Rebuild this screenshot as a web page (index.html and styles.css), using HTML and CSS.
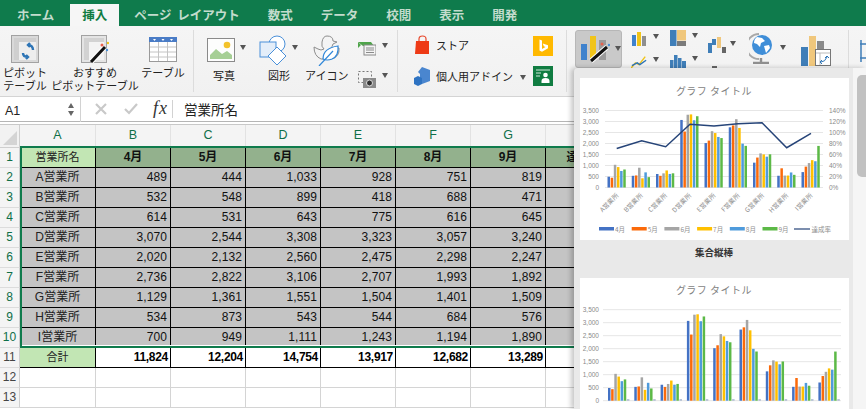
FILE: index.html
```html
<!DOCTYPE html>
<html lang="ja">
<head>
<meta charset="utf-8">
<title>Excel 挿入</title>
<link rel="stylesheet" href="styles.css">
</head>
<body>
<div class="app">
  <nav class="tabs">
    <span class="tab">ホーム</span>
    <span class="tab active">挿入</span>
    <span class="tab">ページ レイアウト</span>
    <span class="tab">数式</span>
    <span class="tab">データ</span>
    <span class="tab">校閲</span>
    <span class="tab">表示</span>
    <span class="tab">開発</span>
  </nav>

  <div class="ribbon">
    <section class="group g1">
      <div class="item w-pivot">
        <svg class="ic i-pivot" viewBox="0 0 28 28"><rect x=".5" y=".5" width="27" height="27" fill="#d9d9d9" stroke="#a2a2a2"/><rect x="3" y="3" width="22" height="22" fill="#eee"/><rect x="3" y="3" width="22" height="4" fill="#cfcfcf"/><rect x="3" y="3" width="5" height="22" fill="#cfcfcf"/><path d="M12 18q0 4 5 4M15 20l2 2-2 2M22 15q0-5-5-5M19 8l-2 2 2 2" fill="none" stroke="#2e75b6" stroke-width="2.4"/></svg>
        <div class="lbl">ピボット<br>テーブル</div>
      </div>
      <div class="item w-rec">
        <svg class="ic i-pivot" viewBox="0 0 28 28"><rect x=".5" y=".5" width="25" height="27" fill="#e4e4e4" stroke="#a2a2a2"/><rect x="3" y="3" width="20" height="22" fill="#f3f3f3"/><rect x="3" y="3" width="20" height="4" fill="#d2d2d2"/><rect x="3" y="3" width="5" height="22" fill="#d2d2d2"/><path d="M10 27L24 12" stroke="#fff" stroke-width="5"/><path d="M10 27L24 12" stroke="#111" stroke-width="3"/><circle cx="21" cy="10" r="1.5" fill="#e8604c"/><circle cx="27" cy="8" r="1.2" fill="#f0c419"/><circle cx="26" cy="15" r="1.2" fill="#4a90d9"/></svg>
        <div class="lbl">おすすめ<br>ピボットテーブル</div>
      </div>
      <div class="item w-tbl">
        <svg class="ic i-tbl" viewBox="0 0 28 25"><rect x=".5" y=".5" width="27" height="24" fill="#fff" stroke="#9a9a9a"/><rect width="28" height="5" fill="#4a7cc6"/><path d="M4 2h3L5.500 4zM12.500 2h3L14 4zM21 2h3l-1.500 2z" fill="#fff"/><path d="M1 10h26M1 15h26M1 20h26M9.500 5v19M18.500 5v19" stroke="#c4c4c4"/></svg>
        <div class="lbl lbl-one">テーブル</div>
      </div>
    </section>

    <section class="group g2">
      <div class="item w-photo">
        <div class="top">
          <svg class="ic i-photo" viewBox="0 0 28 24"><rect x=".5" y=".5" width="27" height="23" fill="#fdfdfd" stroke="#8a8a8a"/><path d="M3 21V17l6-6 6 5 5-3 5 4v4z" fill="#a6cf95"/><circle cx="20" cy="7" r="3.300" fill="#f3c22b"/></svg>
          <i class="caret"></i>
        </div>
        <div class="lbl lbl-one">写真</div>
      </div>
      <div class="item w-shape">
        <div class="top">
          <svg class="ic i-shape" viewBox="0 0 28 30"><circle cx="18" cy="9" r="8" fill="#fff" stroke="#4a90d9"/><rect x="1" y="7" width="16" height="15" fill="#e4eef9" stroke="#4a90d9"/><path d="M18 12l9 9-9 9-9-9z" fill="#fff" stroke="#4a90d9"/></svg>
          <i class="caret"></i>
        </div>
        <div class="lbl lbl-one">図形</div>
      </div>
      <div class="item w-icon">
        <svg class="ic i-duck" viewBox="0 0 27 32"><path d="M14 2q6 0 6 5l4 1-4 2q-1 3-2 4h8q1 9-8 11H8Q1 22 1 13l4 2q3 2 6 0-3-2-2-7 1-6 5-6z" fill="none" stroke="#8d8d8d"/><path d="M10 25q0-11 15-13 1 10-6 13-5 2-9 0z" fill="#fff" stroke="#2e86d8" stroke-width="1.200"/><path d="M6 32l14-15" stroke="#2e86d8" stroke-width="1.200"/></svg>
        <div class="lbl lbl-one">アイコン</div>
      </div>
      <div class="stack">
        <div class="mini">
          <svg class="i-sm" viewBox="0 0 18 16"><path d="M0 2h13l3 4H5z" fill="#4fa44a"/><path d="M0 2l3 3L0 8z" fill="#4fa44a"/><rect x="6" y="5" width="12" height="10" fill="#f4f4f4" stroke="#8a8a8a"/><path d="M8 8h8M8 10h8M8 12.500h8" stroke="#8a8a8a"/></svg>
          <i class="caret"></i>
        </div>
        <div class="mini">
          <svg class="i-sm2" viewBox="0 0 18 18"><rect x=".5" y=".5" width="13" height="11" fill="none" stroke="#777" stroke-dasharray="2 2"/><rect x="5" y="7" width="13" height="10" fill="#8a8a8a"/><circle cx="11.500" cy="12" r="3" fill="#333" stroke="#ddd"/></svg>
          <i class="caret"></i>
        </div>
      </div>
    </section>

    <section class="group g3">
      <div class="addin">
        <div class="addin-row">
          <svg class="i-store" viewBox="0 0 15 20"><path d="M4 6V4q0-3 3.500-3T11 4v2" fill="none" stroke="#e8482c" stroke-width="1.200"/><path d="M1 6h13v13H0z" fill="#ee3a16"/></svg>
          <span class="addin-text">ストア</span>
        </div>
        <div class="addin-row">
          <svg class="i-store" viewBox="0 0 17 20"><path d="M8 1l8 3v11l-8 3-2-1V8L4 6z" fill="#4a86cf"/><path d="M4 10l4 2v6l-4 2-4-2v-6z" fill="#2e73c2"/></svg>
          <span class="addin-text">個人用アドイン</span>
          <i class="caret caret-addin"></i>
        </div>
      </div>
      <div class="apps">
        <svg class="i-app" viewBox="0 0 20 20"><rect width="20" height="20" fill="#ffb900"/><path d="M6.500 3.500l2.500 1v8.500l3.500-2-1.700-.8-1-2.700 5.200 1.800v3l-6 3.500-2.500-1.300z" fill="#fff"/></svg>
        <svg class="i-app" viewBox="0 0 20 20"><rect width="20" height="20" fill="#107c41"/><path d="M3 4h14M3 7h5M3 10h4" stroke="#cfe8da"/><circle cx="12.500" cy="9" r="2.300" fill="#fff"/><path d="M8.500 17v-2q0-3 4-3t4 3v2z" fill="#fff"/></svg>
      </div>
    </section>

    <section class="group g4">
      <button class="chart-btn" type="button">
        <svg class="i-rec" viewBox="0 0 30 32"><rect x="1" y="13" width="6" height="16" fill="#3f82cd"/><rect x="10" y="5" width="6" height="24" fill="#f0c419"/><rect x="19" y="9" width="7" height="20" fill="#9a9a9a"/><path d="M11 30L27 16" stroke="#fff" stroke-width="5"/><path d="M11 30L27 16" stroke="#111" stroke-width="3"/><circle cx="22" cy="13" r="1.500" fill="#e8604c"/><circle cx="29" cy="14" r="1.200" fill="#4a90d9"/></svg>
        <i class="caret"></i>
      </button>
      <div class="chart-col c1">
        <div class="mini">
          <svg class="i-ch" viewBox="0 0 16 16"><rect x="1" y="4" width="4" height="11" fill="#3f82cd"/><rect x="6" y="1" width="4" height="14" fill="#f0c419"/><rect x="11" y="5" width="4" height="10" fill="#8f8f8f"/></svg>
          <i class="caret"></i>
        </div>
        <div class="mini">
          <svg class="i-ch" viewBox="0 0 18 16"><path d="M0 15l5-6 4 2 7-9" fill="none" stroke="#f0c419" stroke-width="1.600"/><path d="M1 12l6-3 3 2 7-5" fill="none" stroke="#2e75b6" stroke-width="1.600"/></svg>
          <i class="caret"></i>
        </div>
      </div>
      <div class="chart-col c2">
        <div class="mini">
          <svg class="i-ch" viewBox="0 0 16 16"><rect x="0" y="0" width="6.500" height="16" fill="#3f7eb8"/><rect x="7" y="0" width="9" height="10.500" fill="#f0c77c"/><rect x="7" y="11" width="9" height="5" fill="#7b7b7b"/></svg>
          <i class="caret"></i>
        </div>
        <div class="mini">
          <svg class="i-ch" viewBox="0 0 16 16"><rect x="0" y="7" width="3.500" height="9" fill="#3f7eb8"/><rect x="4" y="2" width="3.500" height="14" fill="#3f7eb8"/><rect x="8" y="5" width="3.500" height="11" fill="#3f7eb8"/><rect x="12" y="8" width="4" height="8" fill="#3f7eb8"/></svg>
          <i class="caret"></i>
        </div>
      </div>
      <div class="chart-col c3">
        <div class="mini">
          <svg class="i-wf" viewBox="0 0 18 17"><rect x="0" y="7" width="4" height="10" fill="#3f7eb8"/><rect x="4" y="3" width="4" height="6" fill="#3f7eb8"/><rect x="9" y="1" width="4" height="11" fill="#f0c77c"/><rect x="14" y="11" width="4" height="6" fill="#666"/></svg>
          <i class="caret"></i>
        </div>
        <i class="under"></i>
      </div>
      <div class="chart-col c4">
        <div class="mini">
          <svg class="i-globe" viewBox="0 0 25 31"><path d="M10 1a12 12 0 0 0 0 25" fill="none" stroke="#a8a8a8" stroke-width="2"/><circle cx="13" cy="12" r="10" fill="#3f8ed8"/><path d="M8 4l5 1 3 3-4 2-1 4-3-3-3-1q0-4 3-6zM15 13l5-1 1 3-4 5z" fill="#fff"/><path d="M4 30h16M12 25v5" stroke="#8f8f8f" stroke-width="2.400"/></svg>
          <i class="caret"></i>
        </div>
      </div>
      <svg class="i-pchart" viewBox="0 0 30 30"><rect x="0" y="11" width="7" height="19" fill="#3f7eb8"/><rect x="8" y="0" width="7" height="30" fill="#f0c77c"/><rect x="16" y="5" width="7" height="25" fill="#8a8a8a"/><rect x="14.500" y="13.500" width="15" height="16" fill="#fff" stroke="#777"/><path d="M15 17h14M19 17v12" stroke="#bbb"/><path d="M20 26q4 0 6-5M24 22l2-2 2 2M21 24l-2 2 2 2" fill="none" stroke="#2e75b6"/></svg>
    </section>
    <section class="group g5">
      <svg class="i-cut" viewBox="0 0 6 22"><path d="M1 0v22M0 4h6M0 18h6" stroke="#3f7eb8" stroke-width="1.500"/></svg>
    </section>
  </div>

  <div class="formula">
    <div class="namebox">A1</div>
    <div class="spin"><i class="up"></i><i class="down"></i></div>
    <div class="fbtns">
      <svg class="fb" viewBox="0 0 12 12"><path d="M1 1l10 10M11 1L1 11" stroke="#c9c9c9" stroke-width="2.200"/></svg>
      <svg class="fb" viewBox="0 0 14 12"><path d="M1 6l4 4 8-9" fill="none" stroke="#c9c9c9" stroke-width="2.200"/></svg>
      <span class="fx">fx</span>
    </div>
    <div class="ftext">営業所名</div>
  </div>

  <main class="sheet">
    <div class="corner"><i></i></div><div class="ch sel">A</div><div class="ch sel">B</div><div class="ch sel">C</div><div class="ch sel">D</div><div class="ch sel">E</div><div class="ch sel">F</div><div class="ch sel">G</div><div class="ch sel">H</div><div class="ch">I</div>

    <div class="rh sel">1</div><div class="c lh">営業所名</div><div class="c hd">4月</div><div class="c hd">5月</div><div class="c hd">6月</div><div class="c hd">7月</div><div class="c hd">8月</div><div class="c hd">9月</div><div class="c hd hd-rate">達成率</div><div class="c"></div>
    <div class="rh sel">2</div><div class="c nm">A営業所</div><div class="c v">489</div><div class="c v">444</div><div class="c v">1,033</div><div class="c v">928</div><div class="c v">751</div><div class="c v">819</div><div class="c v"></div><div class="c"></div>
    <div class="rh sel">3</div><div class="c nm">B営業所</div><div class="c v">532</div><div class="c v">548</div><div class="c v">899</div><div class="c v">418</div><div class="c v">688</div><div class="c v">471</div><div class="c v"></div><div class="c"></div>
    <div class="rh sel">4</div><div class="c nm">C営業所</div><div class="c v">614</div><div class="c v">531</div><div class="c v">643</div><div class="c v">775</div><div class="c v">616</div><div class="c v">645</div><div class="c v"></div><div class="c"></div>
    <div class="rh sel">5</div><div class="c nm">D営業所</div><div class="c v">3,070</div><div class="c v">2,544</div><div class="c v">3,308</div><div class="c v">3,323</div><div class="c v">3,057</div><div class="c v">3,240</div><div class="c v"></div><div class="c"></div>
    <div class="rh sel">6</div><div class="c nm">E営業所</div><div class="c v">2,020</div><div class="c v">2,132</div><div class="c v">2,560</div><div class="c v">2,475</div><div class="c v">2,298</div><div class="c v">2,247</div><div class="c v"></div><div class="c"></div>
    <div class="rh sel">7</div><div class="c nm">F営業所</div><div class="c v">2,736</div><div class="c v">2,822</div><div class="c v">3,106</div><div class="c v">2,707</div><div class="c v">1,993</div><div class="c v">1,892</div><div class="c v"></div><div class="c"></div>
    <div class="rh sel">8</div><div class="c nm">G営業所</div><div class="c v">1,129</div><div class="c v">1,361</div><div class="c v">1,551</div><div class="c v">1,504</div><div class="c v">1,401</div><div class="c v">1,509</div><div class="c v"></div><div class="c"></div>
    <div class="rh sel">9</div><div class="c nm">H営業所</div><div class="c v">534</div><div class="c v">873</div><div class="c v">543</div><div class="c v">544</div><div class="c v">684</div><div class="c v">576</div><div class="c v"></div><div class="c"></div>
    <div class="rh sel">10</div><div class="c nm">I営業所</div><div class="c v">700</div><div class="c v">949</div><div class="c v">1,111</div><div class="c v">1,243</div><div class="c v">1,194</div><div class="c v">1,890</div><div class="c v"></div><div class="c"></div>
    <div class="rh">11</div><div class="c tl">合計</div><div class="c t">11,824</div><div class="c t">12,204</div><div class="c t">14,754</div><div class="c t">13,917</div><div class="c t">12,682</div><div class="c t">13,289</div><div class="c t"></div><div class="c"></div>
    <div class="rh">12</div><div class="c e"></div><div class="c e"></div><div class="c e"></div><div class="c e"></div><div class="c e"></div><div class="c e"></div><div class="c e"></div><div class="c e"></div><div class="c e"></div>
    <div class="rh">13</div><div class="c e"></div><div class="c e"></div><div class="c e"></div><div class="c e"></div><div class="c e"></div><div class="c e"></div><div class="c e"></div><div class="c e"></div><div class="c e"></div>
    <div class="selection"></div>
  </main>

  <aside class="panel">
    <div class="gallery">
      <div class="thumb"><svg id="combo" class="thumb-svg" viewBox="0 0 269 162"></svg></div>
      <div class="thumb-name">集合縦棒</div>
      <div class="thumb"><svg id="cluster" class="thumb-svg" viewBox="0 0 269 162"></svg></div>
    </div>
    <div class="track"><div class="thumbbar"></div></div>
  </aside>
</div>
<script src="charts.js"></script>
</body>
</html>
```

FILE: styles.css
```css
* { box-sizing: border-box; }
html, body { margin: 0; height: 100%; overflow: hidden; background: #fff; }
body { font-family: "Liberation Sans", "Noto Sans CJK JP", sans-serif; color: #222; }
.app { position: relative; width: 866px; height: 409px; overflow: hidden; }
i { display: block; }

/* tabs */
.tabs { display: flex; height: 26px; background: #0f7b4c; padding: 4px 0 0 5px; }
.tab { padding: 0 12px; margin-right: 4px; font: 700 12.500px/22px "Noto Sans CJK JP", sans-serif; word-spacing: 3px; color: #c3dccd; white-space: nowrap; }
.tab.active { background: #f6f6f6; color: #107c41; padding: 0 12px; margin: 0 3px 0 0; }

/* ribbon */
.ribbon { display: flex; height: 71px; padding-top: 4px; background: linear-gradient(#f5f5f5, #f1f1f1); border-bottom: 1px solid #d4d4d4; }
.group { display: flex; height: 62px; border-right: 1px solid #dcdcdc; flex: none; }
.g1 { width: 194px; }
.g2 { width: 204px; }
.g3 { width: 169px; }
.g4 { width: 282px; }
.g5 { border: 0; padding: 10px 0 0 11px; }
.item { flex: none; padding-top: 5px; }
.top { display: flex; width: 60px; }
.lbl { font: 11px/13px "Noto Sans CJK JP", sans-serif; color: #222; text-align: center; white-space: nowrap; margin-top: 3px; }
.lbl-one { margin-top: 3px; }
.ic { display: block; flex: none; }
.w-pivot { width: 50px; }
.w-rec { width: 90px; }
.w-tbl { width: 46px; }
.i-pivot { width: 28px; height: 28px; margin: 0 auto 3px; }
.w-rec .i-pivot { margin-left: 31px; }
.w-tbl .i-tbl { width: 28px; height: 25px; margin: 2px auto 3px 9px; }
.w-tbl .lbl { margin-top: 4px; }
.w-photo { width: 34px; margin-left: 13px; }
.i-photo { width: 28px; height: 24px; margin: 3px 0 4px; }
.w-shape { width: 36px; margin-left: 18px; }
.w-shape .lbl, .w-photo .lbl { margin-top: 3px; width: 34px; }
.w-shape .lbl { margin-left: 3px; }
.i-shape { width: 28px; height: 30px; margin-bottom: 1px; }
.caret { flex: none; width: 0; height: 0; border: 3.500px solid transparent; border-top: 5px solid #555; border-bottom: 0; margin: 10px 0 0 5px; }
.w-icon { width: 42px; margin-left: 10px; }
.i-duck { width: 27px; height: 32px; margin: -1px 0 0 8px; }
.w-icon .lbl { margin-top: 3px; }
.stack { margin-left: 11px; padding-top: 10px; display: flex; flex-direction: column; gap: 14px; }
.mini { display: flex; align-items: flex-start; }
.mini .caret { margin: 3px 0 0 6px; }
.i-sm { width: 18px; height: 16px; flex: none; }
.i-sm2 { width: 18px; height: 18px; flex: none; margin-top: 1px; }

.addin { margin-left: 16px; width: 119px; padding-top: 5px; display: flex; flex-direction: column; gap: 11px; }
.addin-row { display: flex; align-items: center; height: 20px; }
.i-store { width: 17px; height: 20px; flex: none; }
.addin-text { margin-left: 5px; font: 11px/20px "Noto Sans CJK JP", sans-serif; white-space: nowrap; }
.caret.caret-addin { margin: 2px 0 0 7px; }
.apps { padding-top: 6px; display: flex; flex-direction: column; gap: 10px; }
.i-app { display: block; width: 20px; height: 20px; }

.g4 { padding-left: 8px; }
.chart-btn { flex: none; display: flex; align-items: flex-start; width: 47px; height: 38px; padding: 0 0 0 4px; margin: 0; border: 1px solid #b7b7b7; border-radius: 3px; background: #c9c9c9; }
.i-rec { width: 30px; height: 32px; flex: none; }
.chart-btn .caret { margin: 15px 0 0 5px; }
.chart-col { flex: none; display: flex; flex-direction: column; }
.c1 { margin-left: 9px; padding-top: 1px; gap: 8px; width: 40px; }
.c1 .mini { height: 15px; }
.c2 { margin-left: -1px; padding-top: 0; gap: 7px; }
.i-ch { width: 16px; height: 16px; flex: none; }
.c3 { margin-left: 10px; padding-top: 6px; }
.i-wf { width: 18px; height: 17px; flex: none; }
.c3 .caret { margin: 5px 0 0 4px; }
.under { width: 5px; height: 4px; margin: 13px 0 0 4px; background: #666; }
.c4 { margin-left: 13px; padding-top: 3px; }
.i-globe { width: 25px; height: 31px; flex: none; }
.c4 .caret { margin: 12px 0 0 6px; }
.i-pchart { flex: none; width: 30px; height: 30px; margin: 6px 0 0 15px; }
.i-cut { width: 6px; height: 22px; }

/* formula bar */
.formula { display: flex; align-items: center; height: 25px; background: #fff; border-bottom: 1px solid #b5b5b5; }
.namebox { width: 66px; padding: 3px 0 0 5px; font-size: 12.500px; color: #222; }
.spin { width: 15px; height: 25px; display: flex; flex-direction: column; justify-content: center; gap: 3px; border-right: 1px solid #d2d2d2; }
.up, .down { width: 0; height: 0; margin-left: 2px; border: 3.500px solid transparent; }
.up { border-bottom: 5px solid #666; border-top: 0; }
.down { border-top: 5px solid #666; border-bottom: 0; }
.fbtns { display: flex; align-items: center; height: 25px; width: 95px; padding-left: 14px; }
.fb { width: 12px; height: 12px; flex: none; margin-right: 17px; }
.fb + .fb { width: 14px; margin-right: 15px; }
.fx { font: italic 18px/17px "Liberation Serif", serif; letter-spacing: 1px; color: #333; padding-right: 4px; border-right: 1px solid #d2d2d2; height: 18px; white-space: nowrap; }
.ftext { font: 13.500px/25px "Noto Sans CJK JP", sans-serif; color: #222; margin-left: 8px; }

/* sheet */
.sheet { position: relative; display: grid; grid-template-columns: 20px 76px repeat(7, 75px) 1fr; grid-template-rows: 23px repeat(13, 20px); margin-top: 2px; border-top: 1px solid #c8c8c8; height: 284px; background: #fff; }
.corner { background: #f2f2f2; border-right: 1px solid #cfcfcf; border-bottom: 1px solid #cfcfcf; display: flex; align-items: flex-end; justify-content: flex-end; padding: 2px; }
.corner i { width: 0; height: 0; border-style: solid; border-width: 0 0 14px 14px; border-color: transparent transparent #d4d4d4 transparent; }
.ch { background: #f4f4f4; border-right: 1px solid #e2e2e2; border-bottom: 1px solid #cfcfcf; font-size: 12.500px; line-height: 20px; text-align: center; color: #444; }
.rh { background: #f4f4f4; border-right: 1px solid #cfcfcf; border-bottom: 1px solid #dcdcdc; font-size: 12px; line-height: 19px; text-align: center; color: #444; }
.sel { color: #0f6f48; }
.c { background: #fff; border-right: 1px solid #000; border-bottom: 1px solid #000; font-size: 12px; line-height: 19px; white-space: nowrap; overflow: hidden; }
.c:nth-child(10n) { border: 0; border-bottom: 1px solid #d4d4d4; }
.lh { background: #c2e6b4; text-align: center; font-size: 11px; }
.hd { background: #93b18d; text-align: center; font-weight: 700; color: #111; }
.hd-rate { font-size: 11px; }
.nm { background: #c4c4c4; text-align: center; color: #222; }
.v { background: #c4c4c4; text-align: right; padding-right: 3px; letter-spacing: .1px; color: #111; }
.tl { background: #c2e6b4; text-align: center; font-size: 11px; }
.t { text-align: right; padding-right: 2px; font-weight: 700; letter-spacing: -.3px; color: #000; }
.e { border-right: 1px solid #d4d4d4; border-bottom: 1px solid #d4d4d4; }
.selection { position: absolute; left: 20px; top: 21px; width: 600px; height: 202px; border: 2px solid #0f7b4c; pointer-events: none; box-shadow: inset 0 -1px 0 #fff; }

/* chart gallery overlay */
.panel { position: absolute; left: 574px; top: 68px; width: 292px; height: 341px; display: flex; background: #e9e9e9; border-radius: 4px 0 0 0; box-shadow: -3px 0 5px rgba(0,0,0,.22); }
.gallery { width: 280px; padding: 10px 5px 0 6px; overflow: hidden; }
.thumb { background: #fff; width: 269px; height: 162px; }
.thumb-svg { display: block; width: 269px; height: 162px; }
.thumb-name { height: 38px; font: 700 9.500px/24px "Noto Sans CJK JP", sans-serif; color: #333; text-align: center; }
.track { flex: 1; background: #f5f5f5; padding: 7px 0 0 4px; }
.thumbbar { width: 9px; height: 102px; background: #c1c1c1; border-radius: 5px 0 0 5px; }
```

FILE: charts.js
```js
var DATA = [
  [489, 444, 1033, 928, 751, 819],
  [532, 548, 899, 418, 688, 471],
  [614, 531, 643, 775, 616, 645],
  [3070, 2544, 3308, 3323, 3057, 3240],
  [2020, 2132, 2560, 2475, 2298, 2247],
  [2736, 2822, 3106, 2707, 1993, 1892],
  [1129, 1361, 1551, 1504, 1401, 1509],
  [534, 873, 543, 544, 684, 576],
  [700, 949, 1111, 1243, 1194, 1890]
];
var NAMES = ["A", "B", "C", "D", "E", "F", "G", "H", "I"];
var VIVID = ["#4472c4", "#fb6a0a", "#a5a5a5", "#ffc000", "#4f9bdc", "#5cb947"];
var TICKS = ["0", "500", "1,000", "1,500", "2,000", "2,500", "3,000", "3,500"];
var FONT = 'font-family="Noto Sans CJK JP, sans-serif"';
var AXIS = 'font-family="Liberation Sans, sans-serif" font-size="6.5" fill="#8a8a8a"';

function title(x, y) {
  return '<text x="' + x + '" y="' + y + '" text-anchor="middle" font-size="10" letter-spacing=".5" fill="#7f7f7f" ' + FONT + '>グラフ タイトル</text>';
}

function grid(x0, x1, yBottom, step, labelEnd) {
  var s = "";
  for (var i = 0; i < 8; i++) {
    var y = yBottom - i * step;
    s += '<line x1="' + x0 + '" x2="' + x1 + '" y1="' + y + '" y2="' + y + '" stroke="#e6e6e6"/>';
    s += '<text x="' + labelEnd + '" y="' + (y + 2.5) + '" text-anchor="end" ' + AXIS + '>' + TICKS[i] + '</text>';
  }
  return s;
}

function bars(first, pitch, yBottom, perUnit) {
  var s = "";
  DATA.forEach(function (row, g) {
    row.forEach(function (v, b) {
      var h = v * perUnit;
      s += '<rect x="' + (first + g * pitch + b * 3.15) + '" y="' + (yBottom - h) + '" width="2.500" height="' + h + '" fill="' + VIVID[b] + '"/>';
    });
  });
  return s;
}

function combo() {
  var yB = 109.5, s = title(134, 17) + grid(25, 243, yB, 11, 19);
  for (var i = 0; i < 8; i++) {
    s += '<text x="249" y="' + (yB - i * 11 + 2.5) + '" ' + AXIS + '>' + (i * 20) + '%</text>';
  }
  s += bars(27.5, 24.25, yB, 0.022);
  s += '<polyline fill="none" stroke="#264478" stroke-width="1.500" points="36.700,70.500 61.700,62.700 85.700,68.700 110,46.300 134,48 158,45.700 182,44.700 206.700,69.700 231,55.300"/>';
  NAMES.forEach(function (n, g) {
    var x = 39 + g * 24.25;
    s += '<text transform="translate(' + x + ' 118) rotate(-45)" text-anchor="end" font-size="6.500" fill="#8f8f8f" ' + FONT + '>' + n + '営業所</text>';
  });
  var legend = ["4月", "5月", "6月", "7月", "8月", "9月"];
  legend.forEach(function (t, i) {
    var x = 19 + i * 32.7;
    s += '<rect x="' + x + '" y="149" width="15" height="3.500" fill="' + VIVID[i] + '"/>';
    s += '<text x="' + (x + 16) + '" y="153.500" font-size="6.500" fill="#8f8f8f" ' + FONT + '>' + t + '</text>';
  });
  s += '<line x1="214" x2="230" y1="151" y2="151" stroke="#264478" stroke-width="1.200"/>';
  s += '<text x="231.500" y="153.500" font-size="6.500" fill="#8f8f8f" ' + FONT + '>達成率</text>';
  return s;
}

function cluster() {
  var yB = 122.700, s = title(134, 16) + grid(23, 261, yB, 13, 19);
  s += bars(28, 26.3, yB, 0.026);
  DATA.forEach(function (row, g) {
    s += '<rect x="' + (28 + g * 26.3 + 18.9) + '" y="' + (yB - 1.5) + '" width="2.500" height="1.500" fill="#a9b8cf"/>';
  });
  return s;
}

document.getElementById("combo").innerHTML = combo();
document.getElementById("cluster").innerHTML = cluster();
```
